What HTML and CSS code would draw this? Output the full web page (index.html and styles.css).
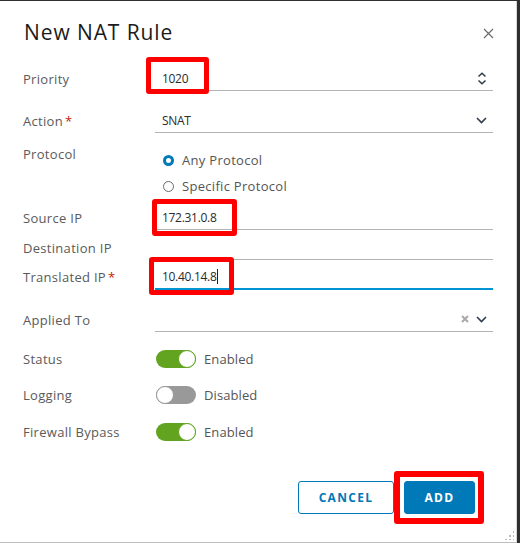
FILE: index.html
```html
<!DOCTYPE html>
<html>
<head>
<meta charset="utf-8">
<link rel="stylesheet" href="styles.css">
</head>
<body>
<div class="dialog">
  <div class="header">
    <h1 class="title">New NAT Rule</h1>
    <svg class="close" width="11" height="11" viewBox="0 0 11 11"><path d="M1 1L10 10M10 1L1 10" stroke="#6a6a6a" stroke-width="1.2" fill="none"/></svg>
  </div>

  <div class="row r-priority">
    <div class="label">Priority</div>
    <div class="field"><span class="val">1020</span>
      <svg class="icon" width="10" height="13" viewBox="0 0 10 13"><path d="M1.5 4.5L5 1.2L8.5 4.5M1.5 8.5L5 11.8L8.5 8.5" stroke="#2d3a4a" stroke-width="1.5" fill="none"/></svg>
    </div>
  </div>

  <div class="row r-action">
    <div class="label">Action<span class="req">*</span></div>
    <div class="field"><span class="val">SNAT</span>
      <svg class="icon" width="11" height="7" viewBox="0 0 11 7"><path d="M1 1L5.5 5.5L10 1" stroke="#2d3a4a" stroke-width="1.6" fill="none"/></svg>
    </div>
  </div>

  <div class="row r-protocol">
    <div class="label">Protocol</div>
    <div class="radios">
      <div class="radio"><span class="dot on"></span>Any Protocol</div>
      <div class="radio"><span class="dot"></span>Specific Protocol</div>
    </div>
  </div>

  <div class="row r-source">
    <div class="label">Source IP</div>
    <div class="field"><span class="val">172.31.0.8</span></div>
  </div>

  <div class="row r-dest">
    <div class="label">Destination IP</div>
    <div class="field"></div>
  </div>

  <div class="row r-trans">
    <div class="label">Translated IP<span class="req">*</span></div>
    <div class="field focus"><span class="val">10.40.14.8</span><span class="caret"></span></div>
  </div>

  <div class="row r-applied">
    <div class="label">Applied To</div>
    <div class="field">
      <svg class="clear" width="8" height="8" viewBox="0 0 8 8"><path d="M1 1L7 7M7 1L1 7" stroke="#a9a9a9" stroke-width="2" fill="none"/></svg>
      <svg class="icon" width="11" height="7" viewBox="0 0 11 7"><path d="M1 1L5.5 5.5L10 1" stroke="#2d3a4a" stroke-width="1.6" fill="none"/></svg>
    </div>
  </div>

  <div class="row r-status">
    <div class="label">Status</div>
    <div class="tog"><span class="toggle on"></span>Enabled</div>
  </div>

  <div class="row r-logging">
    <div class="label">Logging</div>
    <div class="tog"><span class="toggle"></span>Disabled</div>
  </div>

  <div class="row r-fw">
    <div class="label">Firewall Bypass</div>
    <div class="tog"><span class="toggle on"></span>Enabled</div>
  </div>

  <div class="footer">
    <button class="btn outline">CANCEL</button>
    <button class="btn primary">ADD</button>
  </div>

  <div class="mark m1"></div>
  <div class="mark m2"></div>
  <div class="mark m3"></div>
  <div class="mark m4"></div>

  <div class="grip"></div>
</div>
</body>
</html>
```

FILE: styles.css
```css
html, body {
  margin: 0;
  padding: 0;
  background: #2f2f2f;
}
body {
  width: 520px;
  height: 543px;
  overflow: hidden;
  font-family: "Open Sans", "Liberation Sans", sans-serif;
}
.dialog {
  position: relative;
  box-sizing: border-box;
  margin-top: 1px;
  width: 517px;
  height: 542px;
  background: #fff;
  border-right: 1px solid #d8d8d8;
  border-bottom: 1px solid #bdbdbd;
  padding: 0 27px 0 23px;
}
.header {
  display: flex;
  justify-content: space-between;
  align-items: center;
  padding-top: 17px;
  height: 28px;
}
.title {
  margin: 0 0 0 1px;
  font-weight: 400;
  font-size: 21px;
  line-height: 28px;
  color: #1b1b1b;
  letter-spacing: 0.9px;
}
.close {
  margin-right: -5px;
  margin-top: 2px;
}
.row {
  display: grid;
  grid-template-columns: 132px 338px;
  align-items: center;
}
.label {
  font-size: 13px;
  letter-spacing: 0.3px;
  color: #5a5a5a;
  line-height: 18px;
}
.req {
  color: #c92100;
  margin-left: 2px;
}
.field {
  box-sizing: border-box;
  height: 25px;
  border-bottom: 1px solid #b3b3b3;
  display: flex;
  align-items: center;
  padding-left: 7px;
  font-size: 12px;
  letter-spacing: -0.3px;
  color: #2b2b2b;
}
.field.focus {
  height: 26px;
  border-bottom: 2px solid #0094d2;
}
.val { flex: 1; }
.field .icon { margin-right: 6px; }
.caret {
  display: inline-block;
  width: 1px;
  height: 15px;
  background: #222;
  margin-left: 0;
  margin-right: auto;
}
.field.focus .val { flex: none; }
.clear {
  margin-left: auto;
  margin-right: 7px;
}
.r-priority { margin-top: 20px; }
.r-action { margin-top: 17px; }
.r-protocol { margin-top: 12px; align-items: start; }
.r-source { margin-top: 6px; }
.r-dest { margin-top: 5px; }
.r-trans { margin-top: 4px; }
.r-applied { margin-top: 17px; }
.r-status { margin-top: 18px; }
.r-logging { margin-top: 18px; }
.r-fw { margin-top: 19px; }

.radios {
  padding-top: 2px;
  padding-left: 8px;
}
.radio {
  height: 26px;
  display: flex;
  align-items: center;
  font-size: 13px;
  letter-spacing: 0.3px;
  color: #555;
}
.dot {
  box-sizing: border-box;
  width: 11px;
  height: 11px;
  border-radius: 50%;
  border: 1px solid #6b6b6b;
  margin-right: 8px;
}
.dot.on {
  border: 3.5px solid #0079b8;
}

.tog {
  display: flex;
  align-items: center;
  height: 18px;
  font-size: 13px;
  letter-spacing: 0.1px;
  color: #555;
  padding-left: 1px;
}
.toggle {
  position: relative;
  box-sizing: border-box;
  width: 40px;
  height: 18px;
  border-radius: 9px;
  background: #999;
  margin-right: 8px;
}
.toggle::after {
  content: "";
  position: absolute;
  top: 0;
  left: 0;
  box-sizing: border-box;
  width: 18px;
  height: 18px;
  border-radius: 50%;
  background: #fff;
  border: 1px solid #999;
}
.toggle.on { background: #62a420; }
.toggle.on::after {
  left: 22px;
  border-color: #62a420;
}

.footer {
  display: flex;
  justify-content: flex-end;
  gap: 10px;
  margin-top: 40px;
  padding-right: 14px;
}
.btn {
  box-sizing: border-box;
  height: 33px;
  border-radius: 3px;
  font-family: "Open Sans", "Liberation Sans", sans-serif;
  font-weight: 700;
  font-size: 12px;
  letter-spacing: 1.3px;
  padding: 0;
}
.btn.outline {
  width: 96px;
  background: #fff;
  border: 1px solid #0079b8;
  color: #0079b8;
}
.btn.primary {
  width: 71px;
  background: #0079b8;
  border: 1px solid #0079b8;
  color: #fff;
}

.mark {
  position: absolute;
  box-sizing: border-box;
  border: 5px solid #f00;
  border-radius: 3px;
}
.m1 { left: 146px; top: 56px; width: 63px; height: 37px; }
.m2 { left: 152px; top: 198px; width: 85px; height: 37px; }
.m3 { left: 149px; top: 256px; width: 85px; height: 38px; }
.m4 { left: 394px; top: 470px; width: 90px; height: 53px; border-width: 6px; }

.grip {
  position: absolute;
  right: 2px;
  bottom: 2px;
  width: 10px;
  height: 10px;
  background:
    radial-gradient(circle, #bbb 1px, transparent 1.2px) 0 0 / 4px 4px;
  clip-path: polygon(100% 0, 100% 100%, 0 100%);
}
```
